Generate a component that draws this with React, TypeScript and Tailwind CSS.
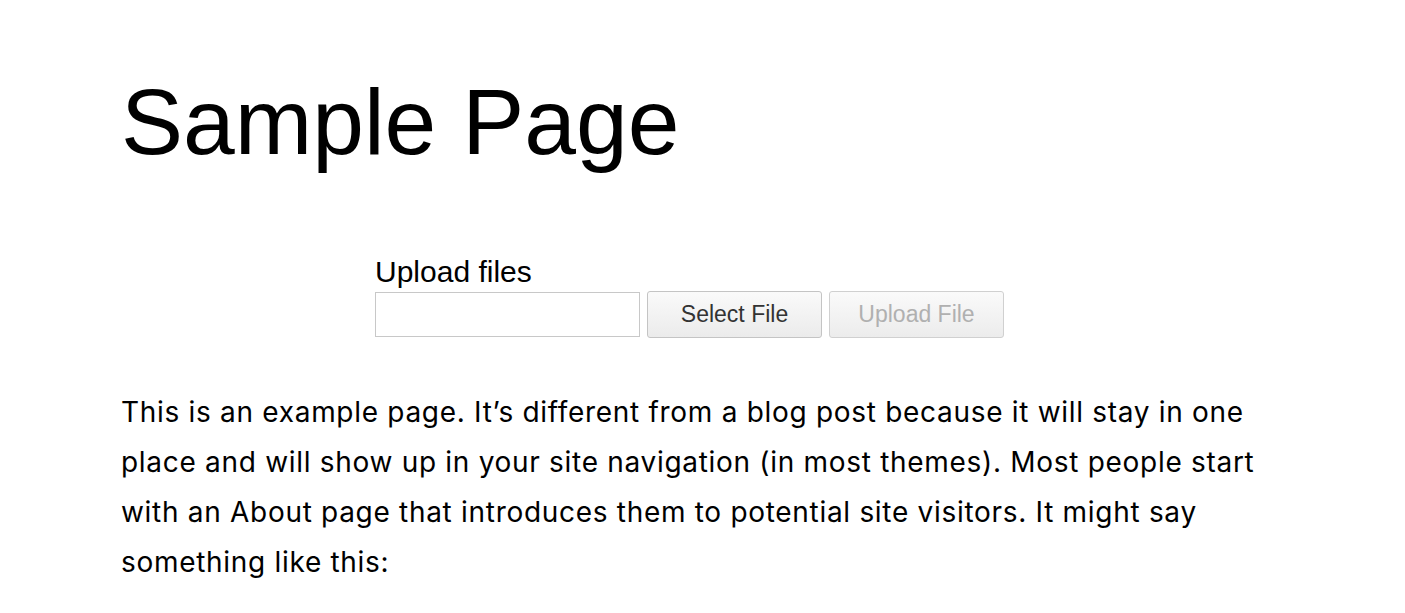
export default function App() {
  return (
    <div className="min-h-screen bg-white text-black" style={{ fontFamily: '"Liberation Sans", Arial, sans-serif' }}>
      <div className="pl-[121px] pr-[100px] pt-[67px]">
        <h1 className="text-[93px] leading-[110px] font-normal">Sample Page</h1>

        <div className="mt-[78px] pl-[254px]">
          <div className="text-[30px] leading-[34px]">Upload files</div>
          <div className="mt-[2px] flex items-center gap-[7px]">
            <input type="text" className="h-[45px] w-[265px] border border-[#c8c8c8] bg-white px-2 outline-none" />
            <button className="h-[47px] w-[175px] rounded-[3px] border border-[#c4c4c4] bg-gradient-to-b from-[#fafafa] to-[#ebebeb] text-[23px] text-[#333]">
              Select File
            </button>
            <button disabled className="h-[47px] w-[175px] rounded-[3px] border border-[#d0d0d0] bg-gradient-to-b from-[#fafafa] to-[#ececec] text-[23px] text-[#b0b0b0]">
              Upload File
            </button>
          </div>
        </div>

        <p
          className="mt-[49px] max-w-[1165px] text-[28px] leading-[50px] tracking-[0.7px]"
          style={{ fontFamily: 'Inter, "Liberation Sans", sans-serif' }}
        >
          This is an example page. It’s different from a blog post because it will stay in one place and will show up in your site navigation (in most themes). Most people start with an About page that introduces them to potential site visitors. It might say something like this:
        </p>
      </div>
    </div>
  )
}
